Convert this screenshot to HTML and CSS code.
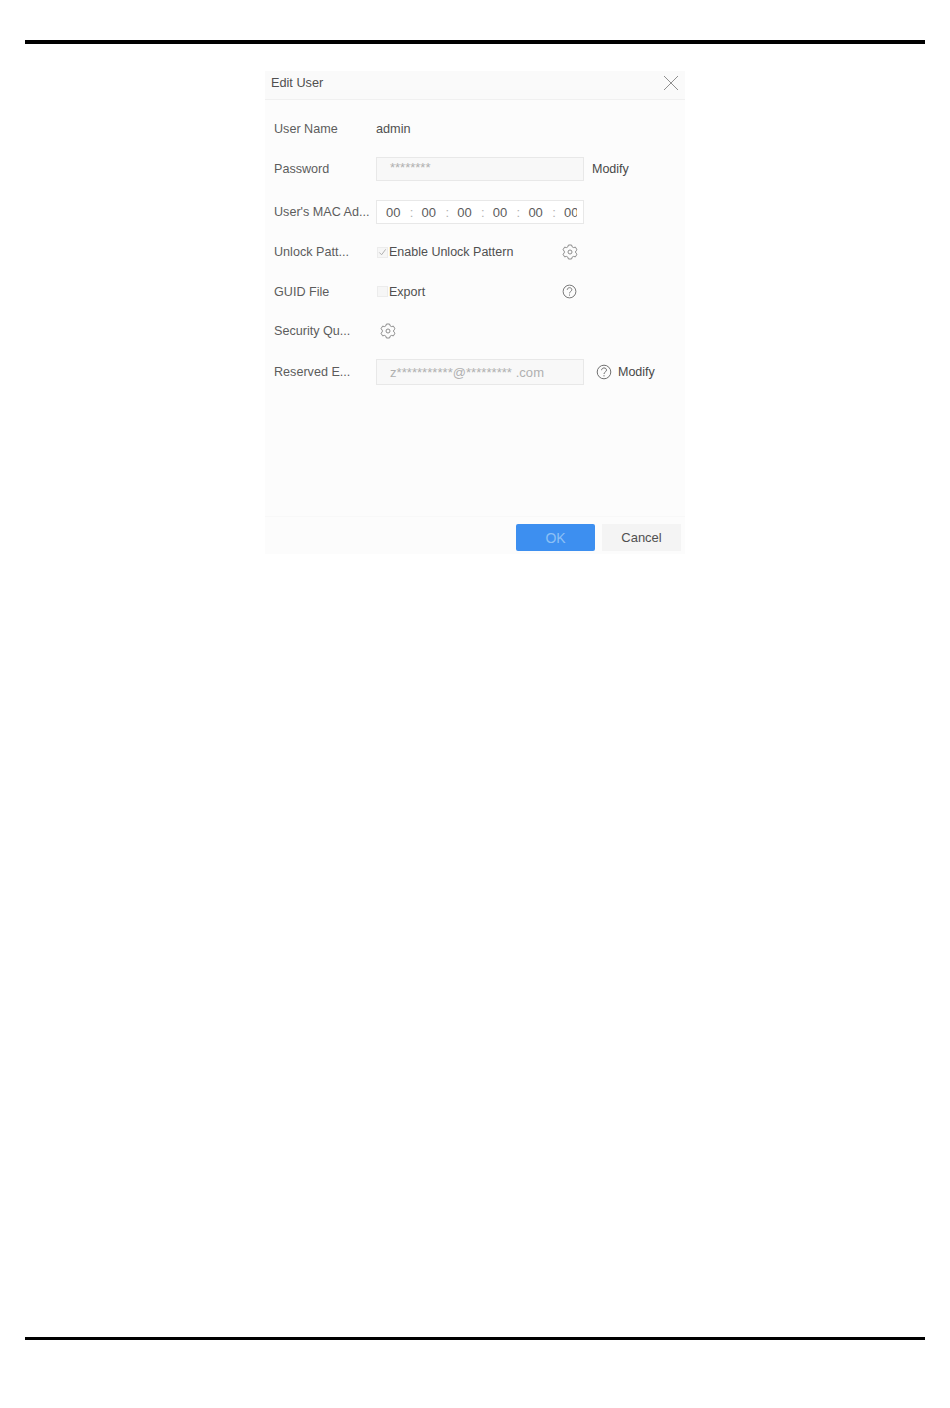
FILE: index.html
```html
<!DOCTYPE html>
<html lang="en">
<head>
    <meta charset="UTF-8">
    <title>Edit User</title>
    <link rel="stylesheet" href="styles.css">
</head>
<body>
    <div class="page">
        <div class="rule"></div>
        <div class="dialog">
            <div class="dialog-head">
                <span class="dialog-title">Edit User</span>
                <svg class="close-icon" width="16" height="16" viewBox="0 0 16 16"><path d="M1 1L15 15M15 1L1 15" stroke="#8f8f8f" stroke-width="1" fill="none"/></svg>
            </div>
            <div class="dialog-body">
                <div class="row row-name">
                    <span class="label">User Name</span>
                    <span class="value">admin</span>
                </div>
                <div class="row row-pass">
                    <span class="label">Password</span>
                    <div class="field field-off"><span class="stars">********</span></div>
                    <span class="link">Modify</span>
                </div>
                <div class="row row-mac">
                    <span class="label">User's MAC Ad...</span>
                    <div class="field mac">
                        <span class="mac-part">00</span><span class="colon">:</span>
                        <span class="mac-part">00</span><span class="colon">:</span>
                        <span class="mac-part">00</span><span class="colon">:</span>
                        <span class="mac-part">00</span><span class="colon">:</span>
                        <span class="mac-part">00</span><span class="colon">:</span>
                        <span class="mac-part mac-last">00</span>
                    </div>
                </div>
                <div class="row">
                    <span class="label">Unlock Patt...</span>
                    <div class="check-wrap">
                        <span class="check">
                            <svg width="9" height="9" viewBox="0 0 10 10"><path d="M1.5 5L4 7.5L8.5 1.5" stroke="#a8a8a8" stroke-width="1" fill="none"/></svg>
                        </span>
                        <span class="value value-check">Enable Unlock Pattern</span>
                    </div>
                    <svg class="icon" width="16" height="16" viewBox="0 0 16 16"><use href="#gear"/></svg>
                </div>
                <div class="row row-guid">
                    <span class="label">GUID File</span>
                    <div class="check-wrap">
                        <span class="check"></span>
                        <span class="value value-check">Export</span>
                    </div>
                    <svg class="icon" width="15" height="15" viewBox="0 0 16 16"><use href="#help"/></svg>
                </div>
                <div class="row">
                    <span class="label">Security Qu...</span>
                    <svg class="icon icon-sec" width="16" height="16" viewBox="0 0 16 16"><use href="#gear"/></svg>
                </div>
                <div class="row row-mail">
                    <span class="label">Reserved E...</span>
                    <div class="field field-off field-mail">z***********@********* .com</div>
                    <svg class="icon icon-mail" width="16" height="16" viewBox="0 0 16 16"><use href="#help"/></svg>
                    <span class="link link-mail">Modify</span>
                </div>
            </div>
            <div class="dialog-foot">
                <button class="btn btn-ok">OK</button>
                <button class="btn btn-cancel">Cancel</button>
            </div>
        </div>
        <div class="rule rule-bottom"></div>
    </div>

    <svg class="defs" width="0" height="0">
        <defs>
            <g id="gear" fill="none" stroke="#808080" stroke-width="0.9">
                <path d="M6.4 1L9.6 1L10.1 2.8L11.6 3.6L13.4 3.1L15 5.8L13.7 7.1L13.7 8.9L15 10.2L13.4 12.9L11.6 12.4L10.1 13.2L9.6 15L6.4 15L5.9 13.2L4.4 12.4L2.6 12.9L1 10.2L2.3 8.9L2.3 7.1L1 5.8L2.6 3.1L4.4 3.6L5.9 2.8Z"/>
                <circle cx="8" cy="8" r="2"/>
            </g>
            <g id="help" fill="none" stroke="#707070" stroke-width="1">
                <circle cx="8" cy="8" r="6.8"/>
                <path d="M5.6 6.2C5.6 3.2 10.5 3.2 10.5 6.1C10.5 7.9 8 8 8 10"/>
                <path d="M8 11.2L8 12.4"/>
            </g>
        </defs>
    </svg>
</body>
</html>
```

FILE: styles.css
```css
body {
    margin: 0;
    background-color: #fff;
    font-family: "Liberation Sans", Arial, sans-serif;
    font-size: 13px;
    color: #444;
}
.page {
    height: 1408px;
    padding: 40px 25px 0;
    box-sizing: border-box;
    display: flex;
    flex-direction: column;
    overflow: hidden;
}
.rule {
    height: 4px;
    background-color: #000;
    flex-shrink: 0;
}
.rule-bottom {
    margin-top: 783px;
    height: 3px;
}
.dialog {
    width: 420px;
    height: 483px;
    margin: 27px auto 0;
    background-color: #fcfcfc;
    display: flex;
    flex-direction: column;
    flex-shrink: 0;
}
.dialog-head {
    height: 24px;
    padding: 0 6px 4px 6px;
    background-color: #fafafa;
    border-bottom: 1px solid #f0f0f0;
    display: flex;
    align-items: center;
    justify-content: space-between;
}
.dialog-title {
    font-size: 12.7px;
    color: #505050;
}
.dialog-body {
    flex: 1;
    padding: 8px 0 0 9px;
}
.row {
    height: 40px;
    display: flex;
    align-items: center;
}
.row-name {
    height: 41px;
}
.row-pass {
    height: 39px;
}
.row-mac {
    margin-top: 4px;
}
.row-guid {
    height: 39px;
}
.row-mail {
    height: 42px;
}
.label {
    width: 102px;
    flex-shrink: 0;
    white-space: nowrap;
    font-size: 12.6px;
    color: #5c5c5c;
}
.value {
    font-size: 12.7px;
    color: #505050;
    white-space: nowrap;
}
.value-check {
    font-size: 12.5px;
}
.link {
    font-size: 12.5px;
    color: #484848;
    margin-left: 8px;
}
.link-mail {
    margin-left: 6px;
}
.field {
    width: 208px;
    height: 24px;
    box-sizing: border-box;
    border: 1px solid #e8e8e8;
    background-color: #fff;
    display: flex;
    align-items: center;
}
.field-off {
    background-color: #f8f8f8;
    color: #b0b0b0;
}
.stars {
    font-size: 13px;
    margin: -2px 0 0 13px;
}
.field-mail {
    height: 26px;
    padding-left: 13px;
    font-size: 13px;
    letter-spacing: 0.05px;
    white-space: nowrap;
}
.mac {
    padding-left: 9px;
    overflow: hidden;
    font-size: 13px;
    color: #5c5c5c;
}
.mac-part {
    width: 15.6px;
    flex-shrink: 0;
}
.mac-last {
    width: 13px;
    overflow: hidden;
}
.colon {
    width: 20px;
    flex-shrink: 0;
    text-align: center;
    color: #b0b0b0;
}
.check-wrap {
    width: 186px;
    display: flex;
    align-items: center;
}
.check {
    width: 9px;
    height: 9px;
    margin: 0 1px;
    border: 1px solid #ececec;
    background-color: #f6f6f6;
    display: flex;
    align-items: center;
    justify-content: center;
    flex-shrink: 0;
}
.icon {
    flex-shrink: 0;
}
.icon-sec {
    margin-left: 4px;
}
.icon-mail {
    margin-left: 12px;
}
.dialog-foot {
    height: 38px;
    border-top: 1px solid #f8f8f8;
    padding: 7px 4px 0 0;
    box-sizing: border-box;
    display: flex;
    justify-content: flex-end;
    gap: 7px;
}
.btn {
    height: 27px;
    border: none;
    font-family: inherit;
    font-size: 13px;
    padding: 0;
}
.btn-ok {
    width: 79px;
    background-color: #3d8ff0;
    color: #8cc0f5;
    font-size: 14px;
    border-radius: 2px;
}
.btn-cancel {
    width: 79px;
    background-color: #f4f4f4;
    color: #505050;
}
.defs {
    position: absolute;
}
```
